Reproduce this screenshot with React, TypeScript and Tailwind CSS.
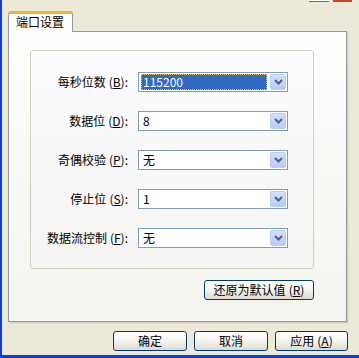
import React from "react";

const font = { fontFamily: '"Noto Sans CJK SC", "Liberation Sans", sans-serif' };

const rows = [
  { label: "每秒位数", key: "B", value: "115200", selected: true },
  { label: "数据位", key: "D", value: "8" },
  { label: "奇偶校验", key: "P", value: "无" },
  { label: "停止位", key: "S", value: "1" },
  { label: "数据流控制", key: "F", value: "无" },
];

const Arrow = () => (
  <div className="w-[16px] h-[16px] rounded-[2px] border border-[#B9CCF6] bg-gradient-to-b from-[#D4E0FC] to-[#B7CCF9] flex items-center justify-center">
    <svg width="9" height="6" viewBox="0 0 9 6">
      <path d="M1 1 L4.5 4.5 L8 1" fill="none" stroke="#4D6185" strokeWidth="2" />
    </svg>
  </div>
);

const Combo = ({ value, selected }: { value: string; selected?: boolean }) => (
  <div className="w-[150px] h-[20px] border border-[#7F9DB9] bg-white flex items-center pl-[2px] pr-[1px] gap-[3px]">
    {selected ? (
      <div className="flex-1 h-[16px] bg-[#316AC5] border border-dotted border-[#E8C060] text-white flex items-center pl-[1px] text-[12px] leading-none">
        {value}
      </div>
    ) : (
      <div className="flex-1 h-[16px] flex items-center pl-[2px] text-[12px] leading-none text-black">{value}</div>
    )}
    <Arrow />
  </div>
);

const XPButton = ({ children, w }: { children: React.ReactNode; w: string }) => (
  <div
    className={`${w} h-[20px] rounded-[3px] border border-[#003C74] bg-gradient-to-b from-white via-[#F4F3EE] to-[#DCDAD0] flex items-center justify-center text-[12px] leading-none text-black`}
  >
    {children}
  </div>
);

export default function App() {
  return (
    <div className="w-[359px] h-[358px] bg-[#ECE9D8] flex flex-col relative overflow-hidden" style={font}>
      <div className="absolute top-0 right-[30px] w-[20px] h-[2px] bg-white border-b border-[#3A6EE8]" />
      <div className="absolute top-0 right-[7px] w-[19px] h-[2px] bg-[#C7472C]" />
      <div className="flex flex-1">
        <div className="w-[2px] bg-[#0A3FD9]" />
        <div className="flex-1 pl-[6px] pr-[10px] pt-[11px] flex flex-col">
          <div className="flex h-[20px]">
            <div className="w-[65px] relative z-10 -mb-px bg-white border-x border-[#919B9C] rounded-t-[3px] border-t-[3px] border-t-[#F7B030] flex items-start pt-[2px] pl-[7px] text-[12px] leading-none text-black">
              端口设置
            </div>
          </div>
          <div className="h-[291px] border border-[#919B9C] bg-gradient-to-b from-white to-[#F4F3EE] shadow-[1px_1px_0_#D2D0C4,2px_2px_0_#E2DFD2] pl-[21px] pt-[18px] flex flex-col w-[339px]">
            <div className="w-[284px] h-[219px] border border-[#D0D0BF] rounded-[3px] bg-gradient-to-b from-[#FDFCFE] to-[#F5F4F2] pt-[21px] flex flex-col gap-[19px]">
              {rows.map((r) => (
                <div key={r.key} className="flex items-center h-[20px]">
                  <div className="w-[97px] text-right text-[12px] leading-none text-black whitespace-nowrap">
                    {r.label}
                    <span className="ml-[3px]">
                      (<u>{r.key}</u>):
                    </span>
                  </div>
                  <div className="ml-[10px]">
                    <Combo value={r.value} selected={r.selected} />
                  </div>
                </div>
              ))}
            </div>
            <div className="w-[284px] flex justify-end mt-[11px]">
              <XPButton w="w-[110px]">
                还原为默认值<span className="ml-[3px]">(<u>R</u>)</span>
              </XPButton>
            </div>
          </div>
          <div className="mt-[9px] flex justify-end gap-[7px] pr-[1px]">
            <XPButton w="w-[74px]">确定</XPButton>
            <XPButton w="w-[74px]">取消</XPButton>
            <XPButton w="w-[73px]">
              应用<span className="ml-[3px]">(<u>A</u>)</span>
            </XPButton>
          </div>
        </div>
      </div>
      <div className="h-[3px] bg-[#0A3FD9]" />
    </div>
  );
}
